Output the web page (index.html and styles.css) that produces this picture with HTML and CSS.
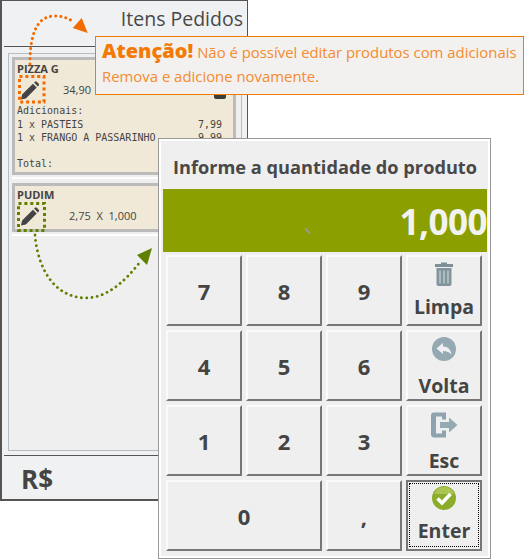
FILE: index.html
```html
<!DOCTYPE html>
<html lang="pt">
<head>
<meta charset="utf-8">
<title>Itens Pedidos</title>
<link rel="stylesheet" href="styles.css">
</head>
<body>
<div class="stage">
  <section class="order">
    <h1 class="order-title">Itens Pedidos</h1>
    <div class="order-list">
      <article class="card card-pizza">
        <div class="card-name">PIZZA G</div>
        <div class="card-row">
          <svg class="pencil" viewBox="0 0 20 20"><path d="M1 19.500l1.200-5.200L13.600 2.900l4 4L6.200 18.300z M14.800 1.700l1-1a1.300 1.300 0 0 1 1.800 0l2.200 2.200a1.300 1.300 0 0 1 0 1.800l-1 1z" fill="#444"/></svg>
          <span class="card-qty">34,90</span>
          <svg class="mini-trash" viewBox="0 0 12 8"><path d="M0 0h12v6a2 2 0 0 1-2 2H2a2 2 0 0 1-2-2z" fill="#3c3c3c"/></svg>
        </div>
        <div class="mono mono-head">Adicionais:</div>
        <div class="mono mono-line"><span>1 x PASTEIS</span><span>7,99</span></div>
        <div class="mono mono-line"><span>1 x FRANGO A PASSARINHO</span><span>9,99</span></div>
        <div class="mono mono-total">Total:</div>
      </article>
      <div class="card-gap"></div>
      <article class="card card-pudim">
        <div class="card-name">PUDIM</div>
        <div class="card-row">
          <svg class="pencil" viewBox="0 0 20 20"><path d="M1 19.500l1.200-5.200L13.600 2.900l4 4L6.200 18.300z M14.800 1.700l1-1a1.300 1.300 0 0 1 1.800 0l2.200 2.200a1.300 1.300 0 0 1 0 1.800l-1 1z" fill="#444"/></svg>
          <span class="card-qty card-qty-wide">2,75&nbsp; X &nbsp;1,000</span>
        </div>
      </article>
      <div class="card-gap"></div>
    </div>
    <div class="order-total">R$</div>
  </section>

  <svg class="arrows" width="525" height="559" viewBox="0 0 525 559">
    <rect x="19.500" y="76.500" width="24.500" height="25.500" fill="none" stroke="#f26a00" stroke-width="3" stroke-dasharray="3 2.900"/>
    <path d="M30 64C30 40 34 16 55 16C62 16 68 18 74 22" fill="none" stroke="#f26a00" stroke-width="3" stroke-linecap="round" stroke-dasharray="0.100 5"/>
    <path d="M87.700 33L72.700 28L81.700 18z" fill="#f26a00"/>
    <rect x="18.500" y="203.500" width="26" height="27" fill="none" stroke="#5f8000" stroke-width="3" stroke-dasharray="3 2.900"/>
    <path d="M35 235C38 270 55 297 85 298C105 298 122 285 140 262" fill="none" stroke="#5f8000" stroke-width="2.800" stroke-linecap="round" stroke-dasharray="0.100 5.200"/>
    <path d="M152 248L137 255L147 265z" fill="#5f8000"/>
  </svg>

  <aside class="alert">
    <div class="alert-line"><strong class="alert-strong">Atenção!</strong> Não é possível editar produtos com adicionais</div>
    <div class="alert-line alert-line-second">Remova e adicione novamente.</div>
  </aside>

  <section class="modal">
    <h2 class="modal-title">Informe a quantidade do produto</h2>
    <div class="display"><i class="display-mark"></i>1,000</div>
    <div class="keypad">
      <button class="key">7</button>
      <button class="key">8</button>
      <button class="key">9</button>
      <button class="key key-action">
        <svg class="key-icon key-icon-limpa" width="18" height="24" viewBox="0 0 18 24"><path d="M6 2V.5h6V2h6v3H0V2z" fill="#7e8f97"/><path d="M1.500 6h15v16a2 2 0 0 1-2 2h-11a2 2 0 0 1-2-2z" fill="#82949c"/><path d="M5 8.500v13M9 8.500v13M13 8.500v13" stroke="#c5ced2" stroke-width="1.300"/></svg>
        <span class="key-label">Limpa</span>
      </button>
      <button class="key">4</button>
      <button class="key">5</button>
      <button class="key">6</button>
      <button class="key key-action">
        <svg class="key-icon key-icon-volta" width="24" height="24" viewBox="0 0 24 24"><circle cx="12" cy="12" r="12" fill="#95a9b3"/><path d="M4.500 11.500L11 6v3.500c5 0 8 3 8.500 8.500c-2-3-4.500-4-8.500-4V17z" fill="#eef1f2"/></svg>
        <span class="key-label">Volta</span>
      </button>
      <button class="key">1</button>
      <button class="key">2</button>
      <button class="key">3</button>
      <button class="key key-action">
        <svg class="key-icon key-icon-esc" width="27" height="26" viewBox="0 0 27 25"><path d="M0 3a3 3 0 0 1 3-3H15v7h-4V4H5v17h6v-3h4v7H3a3 3 0 0 1-3-3z" fill="#8ea3ad"/><path d="M9 9.500h9V5l8.500 7.500L18 20v-4.500H9z" fill="#95a9b3"/></svg>
        <span class="key-label">Esc</span>
      </button>
      <button class="key key-zero">0</button>
      <button class="key">,</button>
      <button class="key key-action key-enter">
        <span class="focus-ring">
          <svg class="key-icon key-icon-enter" width="24" height="24" viewBox="0 0 24 24"><circle cx="12" cy="12" r="12" fill="#8cad2c"/><path d="M12 1a11 9 0 0 1 10 7H2a11 9 0 0 1 10-7z" fill="#aac651"/><path d="M5.500 12.500l4.500 4.500l8.500-9" fill="none" stroke="#fff" stroke-width="3.500"/></svg>
          <span class="key-label">Enter</span>
        </span>
      </button>
    </div>
  </section>
</div>
</body>
</html>
```
FILE: styles.css
```css
* { box-sizing: border-box; }
html, body { margin: 0; padding: 0; background: #fff; }
body { font-family: "Open Sans", "Noto Sans", sans-serif; color: #444; }

.stage { position: relative; width: 525px; height: 559px; overflow: hidden; }

/* order window */
.order {
  position: absolute; left: 0; top: 0; width: 248px; height: 501px;
  display: flex; flex-direction: column;
  background: #f0f1f3; border: 1px solid #555; border-left-width: 2px; border-bottom-width: 2px;
}
.order-title {
  margin: 0 0 0 2px; height: 46px; padding: 3px 4px 0 0; flex: none;
  font-size: 19.500px; font-weight: 400; line-height: 30px; text-align: right; color: #484848;
  border-bottom: 1px solid #555;
}
.order-list {
  flex: 0 0 398px; margin: 6px 0 0 6px; width: 234px; padding: 3px 5px 3px 3px;
  background: #efefef; border: 1px solid #b4bcc6;
}
.card { background: #f0e9d8; border: 3px solid #bbb; padding: 1px 2px 0 2px; }
.card-pizza { height: 118px; }
.card-pudim { height: 49px; }
.card-gap { height: 4px; border-bottom: 2px solid #fff; }
.card-pizza + .card-gap { margin-bottom: 4px; }

.card-name { font-size: 11px; font-weight: 700; line-height: 15px; color: #444; }
.card-row { display: flex; align-items: center; height: 22px; margin-top: 3px; position: relative; }
.pencil { width: 19px; height: 19px; margin-left: 3px; }
.card-qty { margin-left: 24px; font-size: 11px; line-height: 16px; color: #444; }
.card-qty-wide { margin-left: 30px; }
.mini-trash { position: absolute; left: 196px; top: 12px; width: 14px; height: 8px; }

.mono { font-family: "DejaVu Sans Mono", "Liberation Mono", monospace; font-size: 10px; line-height: 13px; color: #444; }
.mono-head { margin-top: 3px; height: 14px; }
.mono-line { display: flex; justify-content: space-between; width: 205px; }
.mono-total { margin-top: 13px; }

.order-total {
  margin-left: 2px; margin-top: 4px; flex: 1; padding: 5px 0 0 17px; border-top: 1px solid #555;
  font-size: 26px; font-weight: 700; line-height: 36px; color: #444;
}

.arrows { position: absolute; left: 0; top: 0; pointer-events: none; }

/* alert */
.alert {
  position: absolute; left: 95px; top: 36px; width: 429px; height: 59px;
  padding: 2px 0 0 6px; background: #f2f1ef; border: 1px solid #f07c00;
  font-size: 14.900px; line-height: 24px; color: #f58b2e;
}
.alert-line { white-space: nowrap; height: 24px; }
.alert-line-second { margin-top: 1px; }
.alert-strong { font-size: 20px; font-weight: 800; color: #f47a06; }

/* modal */
.modal {
  position: absolute; left: 158px; top: 138px; width: 333px; height: 421px;
  background: #efefef; border: 1px solid #999; padding: 2px 3px 0 4px;
  box-shadow: inset 0 0 0 2px #fff;
}
.modal-title {
  margin: 0; height: 48px; padding-top: 13px; text-align: center;
  font-size: 18.200px; font-weight: 700; line-height: 26px; color: #484848; white-space: nowrap;
}
.display {
  position: relative; height: 63px; background: #8ba000; text-align: right;
  font-size: 35px; font-weight: 700; line-height: 66px; color: #f2f2f2; letter-spacing: -0.500px;
}
.display-mark {
  position: absolute; left: 141px; top: 41px; width: 7px; height: 2px;
  background: #9a9a9a; transform: rotate(48deg);
}
.keypad {
  display: grid; grid-template-columns: repeat(4, 76px); grid-auto-rows: 71px; gap: 4px;
  margin: 3px 0 0 3px;
}
.key {
  display: flex; flex-direction: column; align-items: center; justify-content: center;
  margin: 0; padding: 0; background: #efefef; color: #444;
  border: 0; border-top: 2px solid #fafafa; border-left: 2px solid #fafafa;
  border-right: 2px solid #777; border-bottom: 2px solid #777;
  font-family: inherit; font-size: 22px; font-weight: 700; line-height: 28px;
}
.key-zero { grid-column: span 2; }
.key-action { justify-content: flex-start; padding: 0; font-size: 19.500px; line-height: 26px; }
.key-label { display: block; }
.key-icon { display: block; margin-top: 5px; }
.key-icon-limpa { margin-bottom: 8px; }
.key-icon-volta { margin-bottom: 12px; }
.key-icon-esc { margin-bottom: 10px; }
.key-enter { border: 2px solid #777; padding: 1px 1px 2px 1px; }
.focus-ring {
  display: flex; flex-direction: column; align-items: center; width: 100%; height: 100%;
  border: 1px dotted #000;
}
.key-icon-enter { margin-top: 2px; margin-bottom: 8px; }
```
